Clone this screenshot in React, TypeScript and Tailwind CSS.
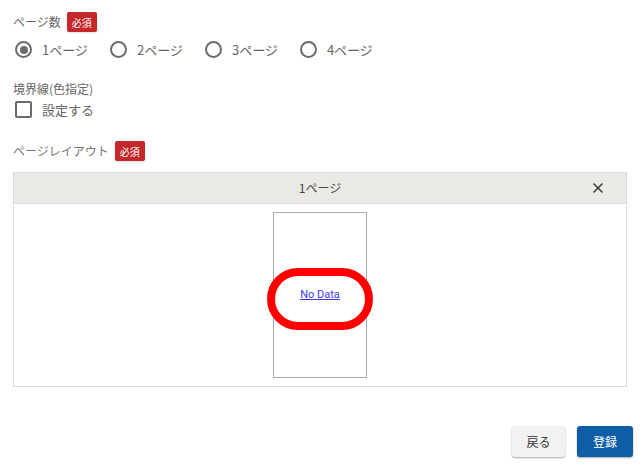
import { X } from "lucide-react";

const font = { fontFamily: '"Noto Sans CJK JP", "Noto Sans", sans-serif' };

const Badge = () => (
  <span className="inline-flex h-[20px] items-center rounded-[2px] bg-[#c4282a] px-[5px] text-[10px] text-white shadow-sm">
    必須
  </span>
);

const Radio = ({ label, checked }: { label: string; checked?: boolean }) => (
  <label className="flex items-center gap-[10px]">
    <span className="flex size-[17px] items-center justify-center rounded-full border-2 border-[#6b6b6b]">
      {checked && <span className="size-[8px] rounded-full bg-[#6b6b6b]" />}
    </span>
    <span className="text-[13px] text-[#666]">{label}</span>
  </label>
);

const App = () => {
  return (
    <div className="relative h-[475px] w-[640px] bg-white px-[13px] pt-[12px]" style={font}>
      <div className="flex items-center gap-[6px]">
        <span className="text-[12px] text-[#666]">ページ数</span>
        <Badge />
      </div>
      <div className="mt-[8px] flex items-center gap-[22px] pl-[2px]">
        <Radio label="1ページ" checked />
        <Radio label="2ページ" />
        <Radio label="3ページ" />
        <Radio label="4ページ" />
      </div>

      <div className="mt-[21px] text-[12px] leading-[16px] text-[#666]">境界線(色指定)</div>
      <label className="mt-[3px] flex items-center gap-[10px] pl-[2px]">
        <span className="size-[17px] rounded-[2px] border-2 border-[#6b6b6b]" />
        <span className="text-[13px] text-[#666]">設定する</span>
      </label>

      <div className="mt-[22px] flex items-center gap-[6px]">
        <span className="text-[12px] text-[#777]">ページレイアウト</span>
        <Badge />
      </div>

      <div className="mt-[11px] w-[614px] border border-[#dcdcdc]">
        <div className="relative flex h-[31px] items-center justify-center border-b border-[#dcdcdc] bg-[#ebe9e6]">
          <span className="text-[12px] text-[#444]">1ページ</span>
          <X className="absolute right-[20px] size-[16px] text-[#333]" strokeWidth={2} />
        </div>
        <div className="flex h-[182px] items-center justify-center">
          <div className="flex h-[166px] w-[94px] items-center justify-center border border-[#aaa]">
            <a href="#" className="text-[11px] text-[#3a3af0] underline" style={{ fontFamily: '"Roboto", sans-serif' }}>
              No Data
            </a>
          </div>
        </div>
      </div>

      <div className="mt-[39px] flex justify-end gap-[12px]">
        <button className="h-[31px] w-[53px] rounded-[3px] bg-[#f2f2f2] text-[12px] text-[#333] shadow-[0_1px_2px_rgba(0,0,0,0.35)]">
          戻る
        </button>
        <button className="-mr-[6px] h-[31px] w-[56px] rounded-[3px] bg-[#0d5ea6] text-[12px] text-white shadow-[0_1px_2px_rgba(0,0,0,0.35)]">
          登録
        </button>
      </div>

      <div className="absolute left-[267px] top-[268px] h-[62px] w-[106px] rounded-[31px] border-[8px] border-[#ff0000]" />
    </div>
  );
};

export default App;
